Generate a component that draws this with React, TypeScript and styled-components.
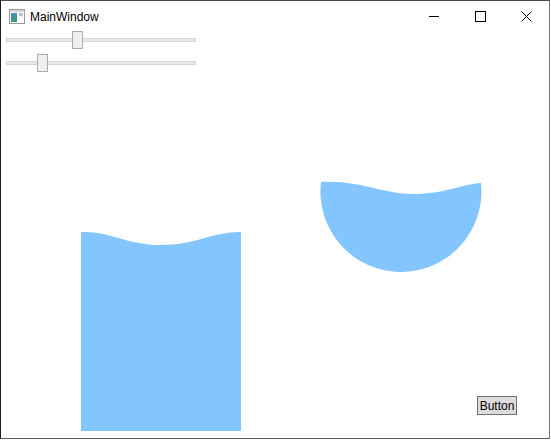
import styled, { createGlobalStyle } from 'styled-components';

const GlobalStyle = createGlobalStyle`
  html, body {
    margin: 0;
    padding: 0;
    background: #fff;
  }
  body {
    font-family: "Liberation Sans", Arial, sans-serif;
  }
`;

const Window = styled.div`
  box-sizing: border-box;
  width: 550px;
  height: 439px;
  display: flex;
  flex-direction: column;
  background: #fff;
  border-left: 1px solid #1e1e1e;
  border-top: 1px solid #4a4a4a;
  border-right: 1px solid #7a7a7a;
  border-bottom: 1px solid #5a5a5a;
`;

const TitleBar = styled.div`
  height: 30px;
  display: flex;
  align-items: center;
  flex-shrink: 0;
`;

const AppIcon = styled.svg`
  margin-left: 8px;
  margin-top: 1px;
  flex-shrink: 0;
`;

const Title = styled.span`
  margin-left: 5px;
  font-size: 12px;
  color: #000;
  flex: 1;
  padding-top: 1px;
`;

const CaptionButton = styled.div`
  width: 46px;
  height: 30px;
  display: flex;
  align-items: center;
  justify-content: center;
`;

const Sliders = styled.div`
  display: flex;
  flex-direction: column;
  margin-left: 5px;
  flex-shrink: 0;
`;

const SliderRow = styled.div`
  position: relative;
  width: 190px;
  height: 23px;
`;

const Track = styled.div`
  position: absolute;
  left: 0;
  right: 0;
  top: 7px;
  height: 4px;
  box-sizing: border-box;
  background: #e7eaea;
  border: 1px solid #d6d6d6;
`;

const Thumb = styled.div`
  position: absolute;
  top: 0;
  width: 11px;
  height: 18px;
  box-sizing: border-box;
  background: #f0f0f0;
  border: 1px solid #acacac;
`;

const Stage = styled.div`
  flex: 1;
  display: grid;
  min-height: 0;
`;

const Drawing = styled.svg`
  grid-area: 1 / 1;
  display: block;
`;

const PushButton = styled.button`
  grid-area: 1 / 1;
  justify-self: end;
  align-self: end;
  margin: 0 32px 23px 0;
  width: 40px;
  height: 19px;
  padding: 0;
  box-sizing: border-box;
  background: #dddddd;
  border: 1px solid #707070;
  border-radius: 0;
  font-family: "Liberation Sans", Arial, sans-serif;
  font-size: 12px;
  color: #000;
`;

const Slider = ({ value }: { value: number }) => {
  const travel = 190 - 11;
  return (
    <SliderRow>
      <Track />
      <Thumb style={{ left: Math.round(travel * value) }} />
    </SliderRow>
  );
};

const WATER = '#82c5ff';

const App = () => {
  return (
    <>
      <GlobalStyle />
      <Window>
        <TitleBar>
          <AppIcon width="16" height="15" viewBox="0 0 16 15">
            <rect x="0.5" y="0.5" width="15" height="14" fill="#fdfdfd" stroke="#9a9a9a" />
            <rect x="1" y="1" width="14" height="2" fill="#d8d8d8" />
            <defs>
              <linearGradient id="ig" x1="0" y1="0" x2="0" y2="1">
                <stop offset="0" stopColor="#4a8fb8" />
                <stop offset="1" stopColor="#3d9a6a" />
              </linearGradient>
            </defs>
            <rect x="2" y="4" width="6" height="9" fill="url(#ig)" />
            <rect x="10" y="4" width="4" height="3" fill="#b8c4cc" />
          </AppIcon>
          <Title>MainWindow</Title>
          <CaptionButton>
            <svg width="10" height="10" viewBox="0 0 10 10">
              <line x1="0" y1="5.5" x2="10" y2="5.5" stroke="#000" strokeWidth="1" />
            </svg>
          </CaptionButton>
          <CaptionButton>
            <svg width="11" height="11" viewBox="0 0 11 11">
              <rect x="0.5" y="0.5" width="10" height="10" fill="none" stroke="#000" strokeWidth="1" />
            </svg>
          </CaptionButton>
          <CaptionButton>
            <svg width="11" height="11" viewBox="0 0 11 11">
              <path d="M0.5 0.5 L10.5 10.5 M10.5 0.5 L0.5 10.5" stroke="#000" strokeWidth="1" />
            </svg>
          </CaptionButton>
        </TitleBar>
        <Sliders>
          <Slider value={0.37} />
          <Slider value={0.174} />
        </Sliders>
        <Stage>
          <Drawing width="548" height="360" viewBox="0 0 548 360">
            <path
              d="M80 155 C110 154 125 168 160 168 C195 168 210 155 240 155 L240 354 L80 354 Z"
              fill={WATER}
            />
            <path
              d="M320 105 C360 103 380 117 412 117 C445 117 460 107 480 106 A80.5 80.5 0 1 1 320 105 Z"
              fill={WATER}
            />
          </Drawing>
          <PushButton>Button</PushButton>
        </Stage>
      </Window>
    </>
  );
};

export default App;
